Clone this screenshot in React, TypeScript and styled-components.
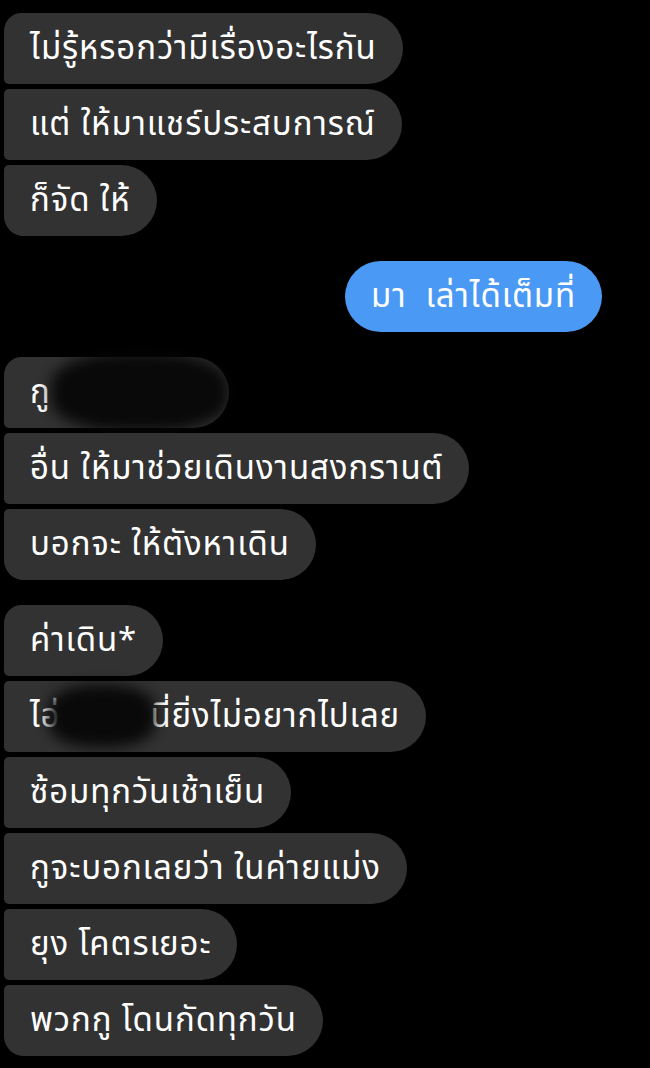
import React from "react";
import styled, { createGlobalStyle } from "styled-components";

const Global = createGlobalStyle`
  html, body { margin: 0; padding: 0; background: #000; }
  body { font-family: "Noto Sans Thai", "Noto Sans", sans-serif; }
`;

const Thread = styled.div`
  display: flex;
  flex-direction: column;
  gap: 25px;
  padding: 13px 48px 0 4px;
  width: 650px;
  height: 1068px;
  box-sizing: border-box;
  overflow: hidden;
  background: #000;
`;

const Group = styled.div<{ $mine?: boolean }>`
  display: flex;
  flex-direction: column;
  gap: 5px;
  align-items: ${(p) => (p.$mine ? "flex-end" : "flex-start")};
`;

const Bubble = styled.div<{ $mine?: boolean; $pos: "first" | "mid" | "last" | "single" }>`
  position: relative;
  box-sizing: border-box;
  height: 71px;
  display: flex;
  align-items: center;
  padding: 1px 26px 0 26px;
  font-size: 33px;
  letter-spacing: 0.9px;
  color: #fff;
  white-space: pre;
  background: ${(p) => (p.$mine ? "#4a99f4" : "#323232")};
  border-radius: ${(p) => {
    if (p.$mine) return "36px";
    const tl = p.$pos === "first" || p.$pos === "single" ? "18px" : "5px";
    const bl = p.$pos === "last" || p.$pos === "single" ? "20px" : "5px";
    return `${tl} 36px 36px ${bl}`;
  }};
`;

const Redaction = styled.span<{ $w: number }>`
  position: relative;
  display: inline-block;
  width: ${(p) => p.$w}px;
  height: 1em;
`;

const Smudge = styled.span<{ $w: number; $h: number; $top: number; $left: number }>`
  position: absolute;
  left: ${(p) => p.$left}px;
  top: ${(p) => p.$top}px;
  width: ${(p) => p.$w}px;
  height: ${(p) => p.$h}px;
  border-radius: 40%;
  background: #070707;
  filter: blur(7px);
  opacity: 0.95;
`;

type Pos = "first" | "mid" | "last" | "single";

function posOf(i: number, n: number): Pos {
  if (n === 1) return "single";
  if (i === 0) return "first";
  if (i === n - 1) return "last";
  return "mid";
}

export default function App() {
  const g1 = ["ไม่รู้หรอกว่ามีเรื่องอะไรกัน", "แต่ ให้มาแชร์ประสบการณ์", "ก็จัด ให้"];
  const g3rest = ["อื่น ให้มาช่วยเดินงานสงกรานต์", "บอกจะ ให้ตังหาเดิน"];
  const g4rest = ["ซ้อมทุกวันเช้าเย็น", "กูจะบอกเลยว่า ในค่ายแม่ง", "ยุง โคตรเยอะ", "พวกกู โดนกัดทุกวัน"];
  return (
    <>
      <Global />
      <Thread>
        <Group>
          {g1.map((t, i) => (
            <Bubble key={i} $pos={posOf(i, g1.length)}>
              {t}
            </Bubble>
          ))}
        </Group>
        <Group $mine>
          <Bubble $mine $pos="single">มา  เล่าได้เต็มที่</Bubble>
        </Group>
        <Group>
          <Bubble $pos="first">
            กู
            <Redaction $w={152}>
              <Smudge $w={178} $h={78} $top={-24} $left={0} />
            </Redaction>
          </Bubble>
          {g3rest.map((t, i) => (
            <Bubble key={i} $pos={i === g3rest.length - 1 ? "last" : "mid"}>
              {t}
            </Bubble>
          ))}
        </Group>
        <Group>
          <Bubble $pos="first">ค่าเดิน*</Bubble>
          <Bubble $pos="mid">
            ไอ่
            <Redaction $w={90}>
              <Smudge $w={108} $h={62} $top={-16} $left={-12} />
            </Redaction>
            นี่ยิ่งไม่อยากไปเลย
          </Bubble>
          {g4rest.map((t, i) => (
            <Bubble key={i} $pos={i === g4rest.length - 1 ? "last" : "mid"}>
              {t}
            </Bubble>
          ))}
        </Group>
      </Thread>
    </>
  );
}
